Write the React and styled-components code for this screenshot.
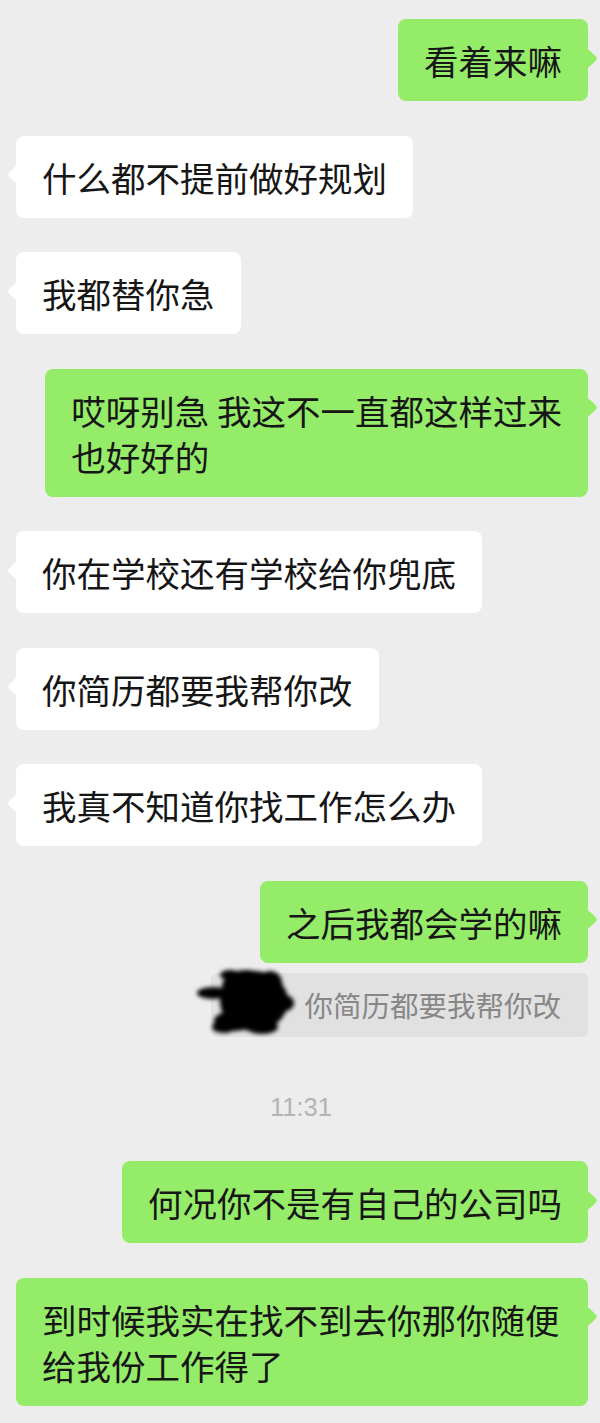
import React from "react";
import styled, { createGlobalStyle } from "styled-components";

const GlobalStyle = createGlobalStyle`
  html, body {
    margin: 0;
    padding: 0;
    background: #ededed;
  }
  body {
    font-family: "Noto Sans CJK SC", "Noto Sans", sans-serif;
  }
`;

const Chat = styled.div`
  width: 600px;
  min-height: 1423px;
  box-sizing: border-box;
  padding: 19px 12px 18px 16px;
  background: #ededed;
  display: flex;
  flex-direction: column;
`;

const Row = styled.div`
  display: flex;
  justify-content: ${(p) => (p.$mine ? "flex-end" : "flex-start")};
  margin-top: ${(p) => (p.$first ? "0" : p.$tight ? "10px" : "34.5px")};
`;

const Bubble = styled.div`
  position: relative;
  box-sizing: border-box;
  max-width: 572px;
  padding: 18px 26px;
  border-radius: 8px;
  background: ${(p) => (p.$mine ? "#95ec69" : "#ffffff")};
  color: #161616;
  font-family: "Noto Sans CJK SC", sans-serif;
  font-size: 34.5px;
  line-height: 46px;
  white-space: pre-wrap;

  &::before {
    content: "";
    position: absolute;
    top: 32.5px;
    ${(p) => (p.$mine ? "right: -6.5px;" : "left: -6.5px;")}
    width: 13px;
    height: 13px;
    border-radius: 2px;
    background: inherit;
    transform: rotate(45deg);
  }
`;

const Quote = styled.div`
  display: flex;
  align-items: center;
  height: 64px;
  box-sizing: border-box;
  padding-right: 27px;
  border-radius: 6px;
  background: #e1e1e1;
  color: #878787;
  font-family: "Noto Sans CJK SC", sans-serif;
  font-size: 28.5px;
`;

const Redaction = styled.svg`
  display: block;
  flex: none;
  width: 108px;
  height: 80px;
  margin: -8px 0 -8px -15px;
  overflow: visible;
`;

const Time = styled.div`
  margin: 55px 0 39.5px;
  height: 30px;
  line-height: 30px;
  text-align: center;
  color: #b3b3b3;
  font-family: "Liberation Sans", Arial, sans-serif;
  font-size: 25.5px;
  padding-right: 2px;
`;

const messages = [
  { mine: true, text: "看着来嘛" },
  { mine: false, text: "什么都不提前做好规划" },
  { mine: false, text: "我都替你急" },
  { mine: true, text: "哎呀别急 我这不一直都这样过来\n也好好的" },
  { mine: false, text: "你在学校还有学校给你兜底" },
  { mine: false, text: "你简历都要我帮你改" },
  { mine: false, text: "我真不知道你找工作怎么办" },
  { mine: true, text: "之后我都会学的嘛" },
];

const later = [
  { mine: true, text: "何况你不是有自己的公司吗" },
  { mine: true, text: "到时候我实在找不到去你那你随便给我份工作得了" },
];

/* svg box: x 197..305, y 964.5..1044.5 on the page */
function Blob() {
  return (
    <Redaction viewBox="0 0 108 80" width="108" height="80">
      <defs>
        <filter id="inkblur" x="-40%" y="-40%" width="180%" height="180%">
          <feGaussianBlur stdDeviation="2.2" />
        </filter>
      </defs>
      <g filter="url(#inkblur)" fill="#050505">
        <ellipse cx="58" cy="36" rx="34" ry="30" />
        <ellipse cx="50" cy="22" rx="24" ry="17" />
        <ellipse cx="74" cy="18" rx="12" ry="12" />
        <ellipse cx="86" cy="38" rx="12" ry="9" />
        <ellipse cx="38" cy="56" rx="20" ry="10" />
        <ellipse cx="28" cy="62" rx="12" ry="6" />
        <ellipse cx="17" cy="28" rx="16" ry="6" />
        <ellipse cx="34" cy="10" rx="10" ry="5" />
        <ellipse cx="66" cy="62" rx="16" ry="7" />
      </g>
    </Redaction>
  );
}

export default function App() {
  return (
    <>
      <GlobalStyle />
      <Chat>
        {messages.map((m, i) => (
          <Row key={i} $mine={m.mine} $first={i === 0}>
            <Bubble $mine={m.mine}>{m.text}</Bubble>
          </Row>
        ))}
        <Row $mine $tight>
          <Quote>
            <Blob />
            你简历都要我帮你改
          </Quote>
        </Row>
        <Time>11:31</Time>
        {later.map((m, i) => (
          <Row key={i} $mine={m.mine} $first={i === 0}>
            <Bubble $mine={m.mine}>{m.text}</Bubble>
          </Row>
        ))}
      </Chat>
    </>
  );
}
